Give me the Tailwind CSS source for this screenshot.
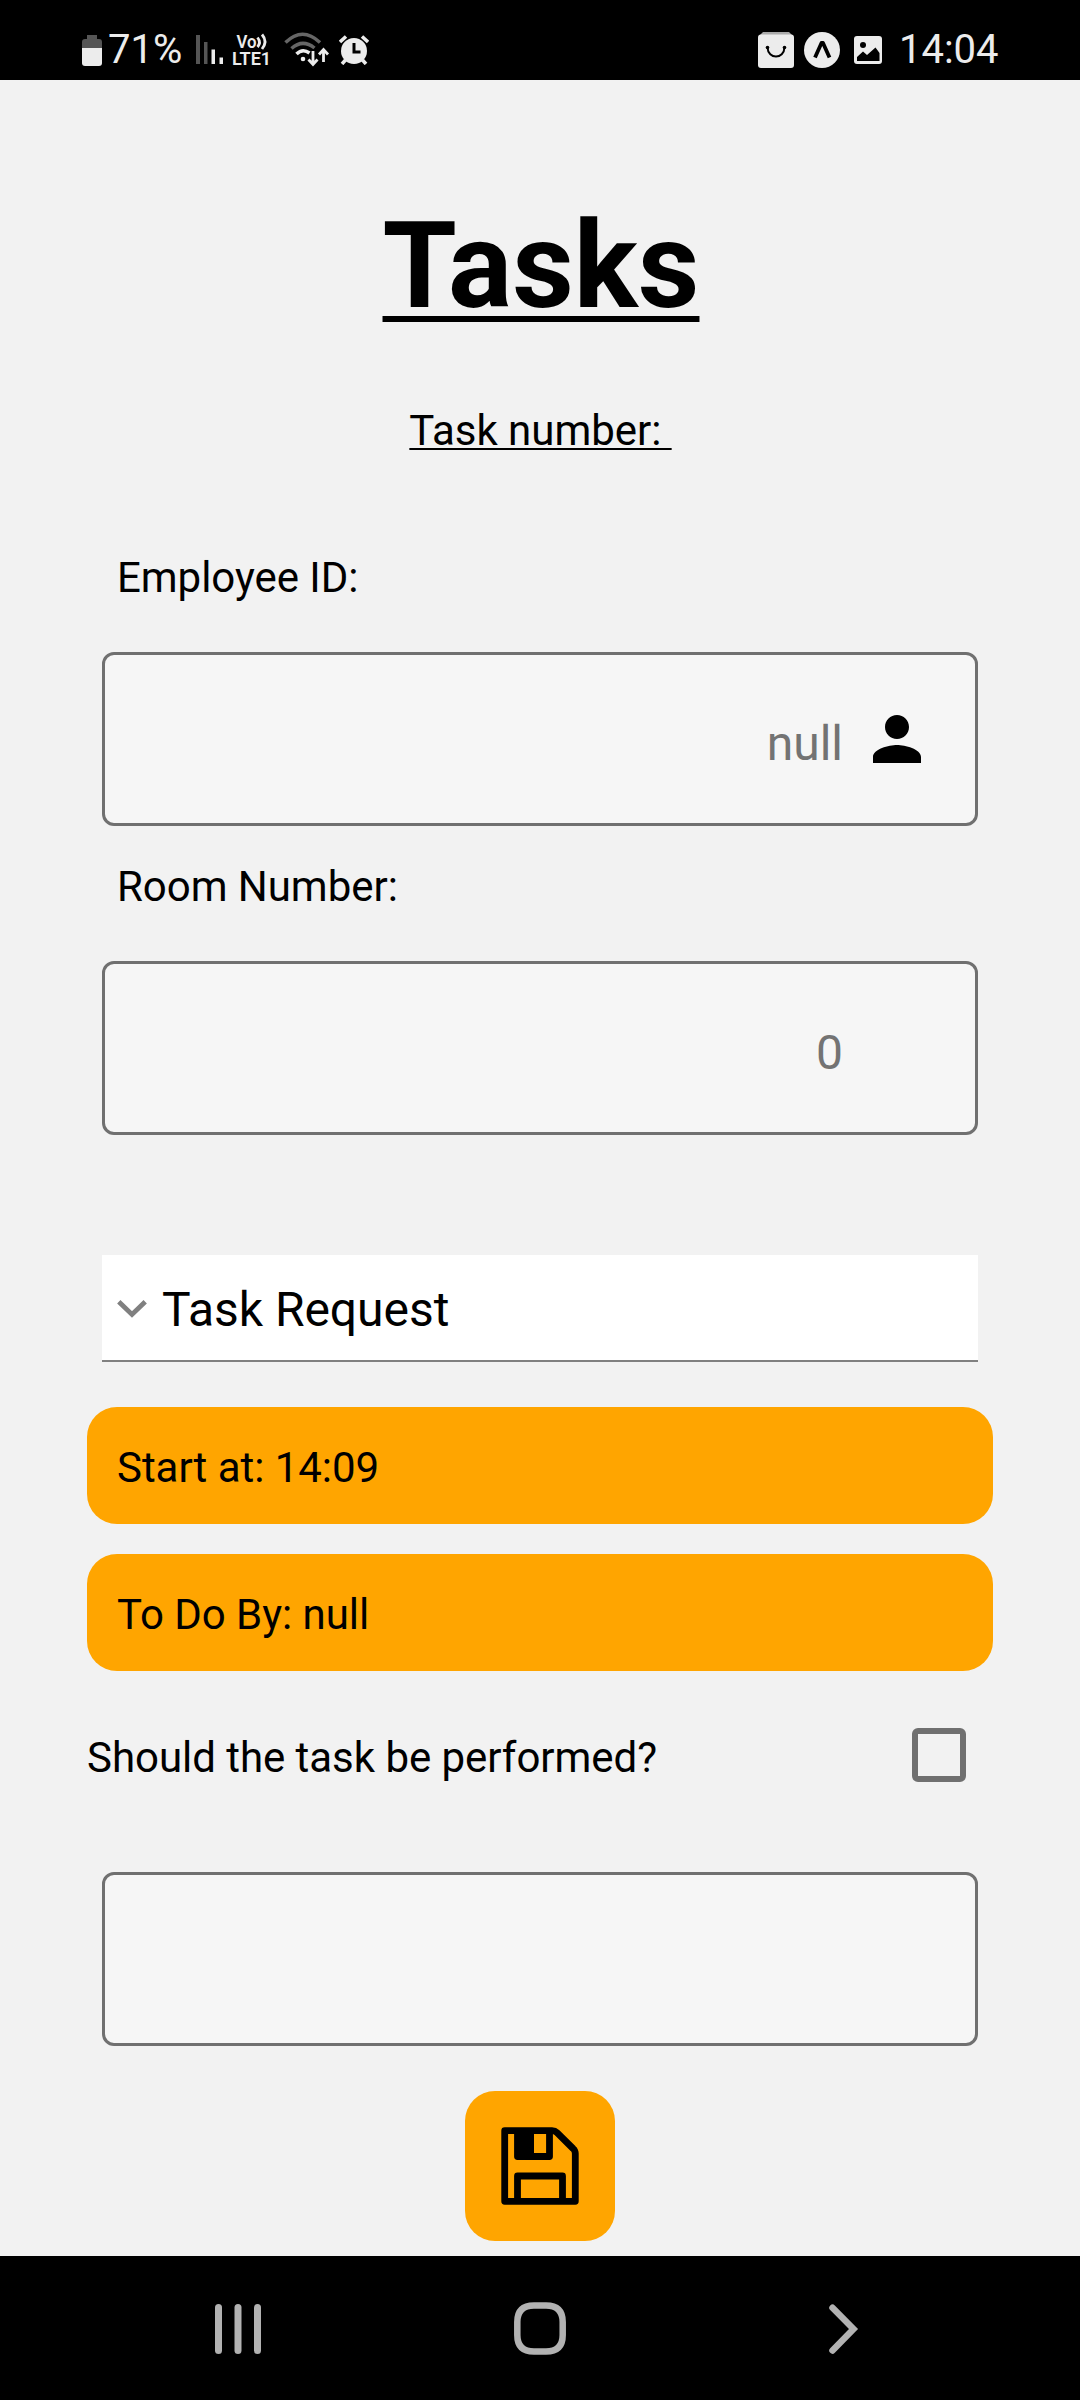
<!DOCTYPE html>
<html lang="en">
<head>
<meta charset="utf-8">
<title>Tasks</title>
<script src="https://cdn.jsdelivr.net/npm/@tailwindcss/browser@4"></script>
</head>
<body class="w-[1080px] h-[2400px] flex flex-col bg-[#f2f2f2] text-black font-['Roboto',sans-serif] text-[42px] leading-[50px] tracking-[-0.04px] overflow-hidden">
  <header class="h-20 shrink-0 bg-black text-[#ececec] flex items-start justify-between pl-[82px] pr-[81px]">
    <div class="flex items-start">
      <svg class="mt-[34px]" width="20" height="32" viewBox="0 0 20 32"><path d="M5 1h10v4h2a3 3 0 0 1 3 3v6H0V8a3 3 0 0 1 3-3h2z" fill="#555"/><path d="M0 14h20v15a3 3 0 0 1-3 3H3a3 3 0 0 1-3-3z" fill="#ececec"/></svg>
      <span class="ml-[6px] mt-[25px] text-[40px] w-[76px] whitespace-nowrap">71%</span>
      <svg class="ml-[12px] mt-[34px]" width="28" height="30" viewBox="0 0 28 30"><path d="M0 1h4v29H0zM8 8h3.500v22H8z" fill="#555"/><path d="M15.500 15.500h3.500V30h-3.500zM23.500 23.500H27V30h-3.500z" fill="#ececec"/></svg>
      <svg class="ml-[8px] mt-[32px]" width="40" height="36" viewBox="0 0 40 36" fill="#ececec"><text x="4.500" y="16" font-family="Roboto" font-weight="600" font-size="17.500" textLength="20" lengthAdjust="spacingAndGlyphs">Vo</text><path d="M25.500 5.500q4 5 0 9.500M30 2.500q6 7 0 14.500" fill="none" stroke="#ececec" stroke-width="2.800"/><text x="0" y="33" font-family="Roboto" font-weight="600" font-size="18.500" textLength="39" lengthAdjust="spacingAndGlyphs">LTE1</text></svg>
      <svg class="ml-[12px] mt-[32px]" width="46" height="36" viewBox="0 0 46 36" fill="none" stroke-width="3.500"><path d="M1.500 10.500Q18.500-6 36 10.500M7.500 16.500Q18.500 6.500 30.500 16" stroke="#666"/><path d="M12.500 22Q18.500 16 25.500 21" stroke="#ececec"/><circle cx="19" cy="27" r="2.300" fill="#ececec"/><path d="M29 19v13M24.500 27.500l4.500 5 4.500-5M39.500 30V18M35 22.500l4.500-5 4.500 5" stroke="#ececec" stroke-width="2.800"/></svg>
      <svg class="ml-[9px] mt-[35px]" width="30" height="30" viewBox="0 0 30 30"><circle cx="15" cy="16" r="13" fill="#ececec"/><path d="M1 7l6-5.500M29 7l-6-5.500M6.500 25L3 29M23.500 25l3.500 4" stroke="#ececec" stroke-width="3.500"/><path d="M15 8v9h6.500" fill="none" stroke="#000" stroke-width="3"/></svg>
    </div>
    <div class="flex items-start">
      <svg class="mt-8" width="36" height="36" viewBox="0 0 36 36"><path d="M5 0h26l3 3v3H2V3z" fill="#aaa"/><rect y="2.500" width="36" height="33.500" rx="3" fill="#ececec"/><path d="M9.500 15.500C10 27.500 26 27.500 26.500 15.500" fill="none" stroke="#000" stroke-width="2"/><circle cx="9.500" cy="15.500" r="1.800"/><circle cx="26.500" cy="15.500" r="1.800"/></svg>
      <svg class="ml-[10px] mt-8" width="36" height="36" viewBox="0 0 36 36"><circle cx="18" cy="18" r="18" fill="#ececec"/><path d="M11 25.500L17.500 11h1.500l6.500 14.500" fill="none" stroke="#000" stroke-width="3.800" stroke-linejoin="round"/></svg>
      <svg class="ml-[14px] mt-9" width="28" height="28" viewBox="0 0 28 28"><rect width="28" height="28" rx="3" fill="#ececec"/><circle cx="9" cy="9" r="3"/><path d="M3 21l6-5.500 4 3.500 8.500-7.500L25.500 17v8H3z"/></svg>
      <span class="ml-[17px] mt-[25px] text-[40px] w-[100px] whitespace-nowrap">14:04</span>
    </div>
  </header>

  <main class="h-[2176px] shrink-0 flex flex-col px-[87px]">
    <h1 class="mt-[116px] ml-[2px] self-center text-[120px] leading-[140px] font-bold underline decoration-[6px] underline-offset-[9px] [text-decoration-skip-ink:none]">Tasks</h1>
    <p class="mt-[70px] ml-[1px] self-center underline decoration-2 underline-offset-[3px] [text-decoration-skip-ink:none]">Task number:&nbsp;</p>

    <label class="mt-[97px] ml-[30px]">Employee ID:</label>
    <div class="mt-[49px] mx-[15px] h-[174px] rounded-xl border-3 border-[#707070] bg-[#f6f6f6] flex pr-[42px]">
      <span class="flex-1 mt-[61px] text-right text-5xl leading-[56px] text-[#737373]">null</span>
      <svg class="ml-[18px] mt-12 size-[72px]" viewBox="0 0 24 24"><path d="M12 12c2.210 0 4-1.790 4-4s-1.790-4-4-4-4 1.790-4 4 1.790 4 4 4zm0 2c-2.670 0-8 1.340-8 4v2h16v-2c0-2.660-5.330-4-8-4z"/></svg>
    </div>

    <label class="mt-[36px] ml-[30px]">Room Number:</label>
    <div class="mt-[49px] mx-[15px] h-[174px] rounded-xl border-3 border-[#707070] bg-[#f6f6f6] flex pr-[132px]">
      <span class="flex-1 mt-[61px] text-right text-5xl leading-[56px] text-[#737373]">0</span>
    </div>

    <div class="mt-[120px] mx-[15px] h-[107px] bg-white border-b-2 border-[#808080] flex items-start pl-[15px]">
      <svg class="mt-[44px]" width="30" height="19" viewBox="0 0 30 19"><path d="M1.800 2.800L15 15.500 28.200 2.800" fill="none" stroke="#808080" stroke-width="4.800"/></svg>
      <span class="ml-[15px] mt-[27px] text-5xl leading-[56px]">Task Request</span>
    </div>

    <div class="mt-[45px] h-[117px] rounded-[30px] bg-[#ffa500] pl-[30px] pt-9">Start at: 14:09</div>
    <div class="mt-[30px] h-[117px] rounded-[30px] bg-[#ffa500] pl-[30px] pt-9">To Do By: null</div>

    <div class="mt-[57px] h-[54px] flex items-start justify-between pr-[27px]">
      <span class="mt-[5px]">Should the task be performed?</span>
      <span class="size-[54px] rounded-md border-6 border-[#707070]"></span>
    </div>

    <div class="mt-[90px] mx-[15px] h-[174px] rounded-xl border-3 border-[#707070] bg-[#f6f6f6]"></div>

    <button class="mt-[45px] self-center size-[150px] rounded-[30px] bg-[#ffa500] flex items-center justify-center">
      <svg width="78" height="78" viewBox="0 0 78 78" fill="none" stroke="#000" stroke-width="6.800" stroke-linejoin="round"><path d="M3.700 3.700H51q3 0 5 2L72 21.500q2.300 2 2.300 5V74.300H3.700z"/><path d="M16.500 4v25.500h32V4M16.500 74V49h45v25"/><path d="M14 2h19v28H17z" fill="#000" stroke="none"/></svg>
    </button>
  </main>

  <nav class="h-36 shrink-0 bg-black flex items-start pl-[215px] text-[#b2b2b2]">
    <svg class="mt-12" width="46" height="50" viewBox="0 0 46 50" fill="currentColor"><rect width="7" height="50" rx="3.500"/><rect x="19.500" width="7" height="50" rx="3.500"/><rect x="39" width="7" height="50" rx="3.500"/></svg>
    <svg class="ml-[253px] mt-[46px]" width="52" height="53" viewBox="0 0 52 53" fill="none" stroke="currentColor" stroke-width="6.500"><path d="M20 3.500h12Q48.700 3.500 48.700 20v13Q48.700 49.500 32 49.500H20Q3.300 49.500 3.300 33V20Q3.300 3.500 20 3.500z"/></svg>
    <svg class="ml-[262px] mt-12" width="32" height="50" viewBox="0 0 32 50" fill="none" stroke="currentColor" stroke-width="6.500" stroke-linecap="round"><path d="M4.500 3.800L25.500 25 4.500 46.500"/></svg>
  </nav>
</body>
</html>
